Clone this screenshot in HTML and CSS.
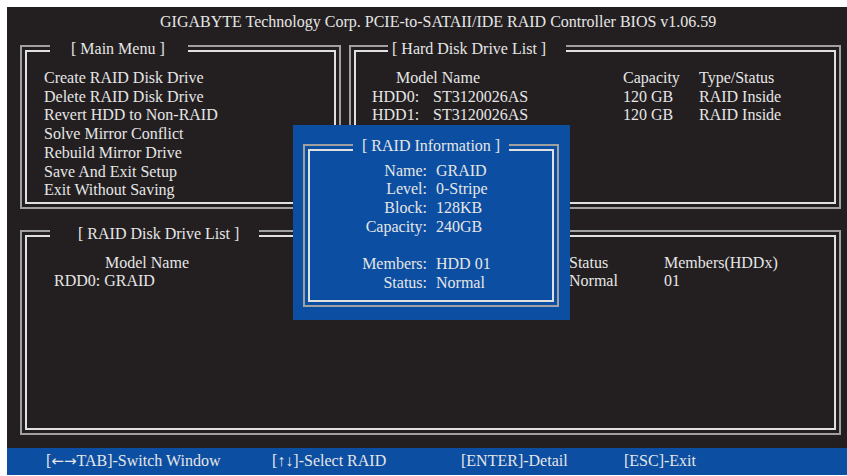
FILE: index.html
```html
<!DOCTYPE html>
<html lang="en">
<head>
    <meta charset="UTF-8">
    <meta name="viewport" content="width=device-width, initial-scale=1.0">
    <title>RAID Controller BIOS</title>
    <link rel="stylesheet" href="styles.css">
</head>
<body>
    <div class="screen">
        <div class="bios-title">GIGABYTE Technology Corp. PCIE-to-SATAII/IDE RAID Controller BIOS v1.06.59</div>

        <div class="top-row">
            <section class="frame main-menu">
                <span class="frame-title">[ Main Menu ]</span>
                <div class="frame-in">
                    <ul class="menu">
                        <li>Create RAID Disk Drive</li>
                        <li>Delete RAID Disk Drive</li>
                        <li>Revert HDD to Non-RAID</li>
                        <li>Solve Mirror Conflict</li>
                        <li>Rebuild Mirror Drive</li>
                        <li>Save And Exit Setup</li>
                        <li>Exit Without Saving</li>
                    </ul>
                </div>
            </section>

            <section class="frame hdd-list">
                <span class="frame-title">[ Hard Disk Drive List ]</span>
                <div class="frame-in">
                    <div class="hdd-table">
                        <div class="hdd-head">Model Name</div>
                        <div>Capacity</div>
                        <div>Type/Status</div>

                        <div>HDD0:</div>
                        <div>ST3120026AS</div>
                        <div>120 GB</div>
                        <div>RAID Inside</div>

                        <div>HDD1:</div>
                        <div>ST3120026AS</div>
                        <div>120 GB</div>
                        <div>RAID Inside</div>
                    </div>
                </div>
            </section>
        </div>

        <section class="frame raid-list">
            <span class="frame-title">[ RAID Disk Drive List ]</span>
            <div class="frame-in">
                <div class="raid-table">
                    <div class="raid-head">Model Name</div>
                    <div>Status</div>
                    <div>Members(HDDx)</div>

                    <div>RDD0: GRAID</div>
                    <div>Normal</div>
                    <div>01</div>
                </div>
            </div>
        </section>

        <div class="keys">
            <span>[<span class="arrow">&larr;&rarr;</span>TAB]-Switch Window</span>
            <span>[&uarr;&darr;]-Select RAID</span>
            <span>[ENTER]-Detail</span>
            <span>[ESC]-Exit</span>
        </div>

        <!-- ventana emergente sobre las listas -->
        <div class="popup">
            <section class="frame info">
                <span class="frame-title">[ RAID Information ]</span>
                <div class="frame-in">
                    <div class="info-table">
                        <div class="lbl">Name:</div><div>GRAID</div>
                        <div class="lbl">Level:</div><div>0-Stripe</div>
                        <div class="lbl">Block:</div><div>128KB</div>
                        <div class="lbl">Capacity:</div><div>240GB</div>
                        <div class="blank"></div><div class="blank"></div>
                        <div class="lbl">Members:</div><div>HDD 01</div>
                        <div class="lbl">Status:</div><div>Normal</div>
                    </div>
                </div>
            </section>
        </div>
    </div>
</body>
</html>
```

FILE: styles.css
```css
body {
    margin: 0;
    background-color: white;
    font-family: "Liberation Serif", "Times New Roman", serif;
    font-size: 16px;
    color: #e6e6e6;
}

.screen {
    position: relative;
    margin: 7px 0 0 7px;
    width: 840px;
    height: 468px;
    background-color: #231f20;
    display: flex;
    flex-direction: column;
}

.bios-title {
    line-height: 30px;
    height: 38px;
    padding-left: 153px;
}

.top-row {
    display: flex;
    gap: 8px;
    margin-left: 13px;
    height: 164px;
}

/* marcos de doble linea */
.frame {
    position: relative;
    box-sizing: border-box;
    border: 2px solid #a0a0a0;
    padding: 3px;
}

.frame-in {
    box-sizing: border-box;
    height: 100%;
    border: 2px solid #e0e0e0;
}

.frame-title {
    position: absolute;
    top: -7.5px;
    line-height: 18.7px;
    background-color: #231f20;
    white-space: nowrap;
}

.main-menu {
    width: 321px;
}

.main-menu .frame-title {
    left: 28px;
    padding: 0 23px 0 21px;
}

.hdd-list {
    width: 492px;
}

.hdd-list .frame-title {
    left: 37px;
    padding: 0 20px 0 4px;
}

.raid-list {
    margin: 21px 0 0 13px;
    width: 821px;
    height: 205px;
}

.raid-list .frame-title {
    left: 28px;
    padding: 0 20px 0 28px;
}

.menu {
    list-style: none;
    margin: 0;
    padding: 17px 0 0 17px;
    line-height: 18.7px;
}

.hdd-table {
    display: grid;
    grid-template-columns: 61px 190px 76px auto;
    padding: 17px 0 0 16px;
    line-height: 18.7px;
}

.hdd-head {
    grid-column: span 2;
    padding-left: 24px;
}

.raid-table {
    display: grid;
    grid-template-columns: 515px 95px auto;
    padding: 16.5px 0 0 27px;
    line-height: 18.7px;
}

.raid-head {
    padding-left: 51px;
}

.keys {
    margin-top: 13px;
    height: 27px;
    line-height: 25px;
    background-color: #0b4ea2;
    display: grid;
    grid-template-columns: 226px 189px 163px auto;
    padding-left: 39px;
}

.arrow {
    font-family: "DejaVu Sans", sans-serif;
    font-size: 15px;
    line-height: 1;
}

.popup {
    position: absolute;
    left: 286px;
    top: 118px;
    width: 277px;
    height: 195px;
    box-sizing: border-box;
    padding: 19px 11px 13px 10px;
    background-color: #0b4ea2;
}

.info {
    height: 100%;
}

.info .frame-title {
    top: -9px;
    left: 48px;
    padding: 0 9px;
    background-color: #0b4ea2;
}

.info-table {
    display: grid;
    grid-template-columns: 117px auto;
    column-gap: 9px;
    padding-top: 10.5px;
    line-height: 18.7px;
}

.info-table .lbl {
    text-align: right;
}

.info-table .blank {
    height: 18.7px;
}
```
